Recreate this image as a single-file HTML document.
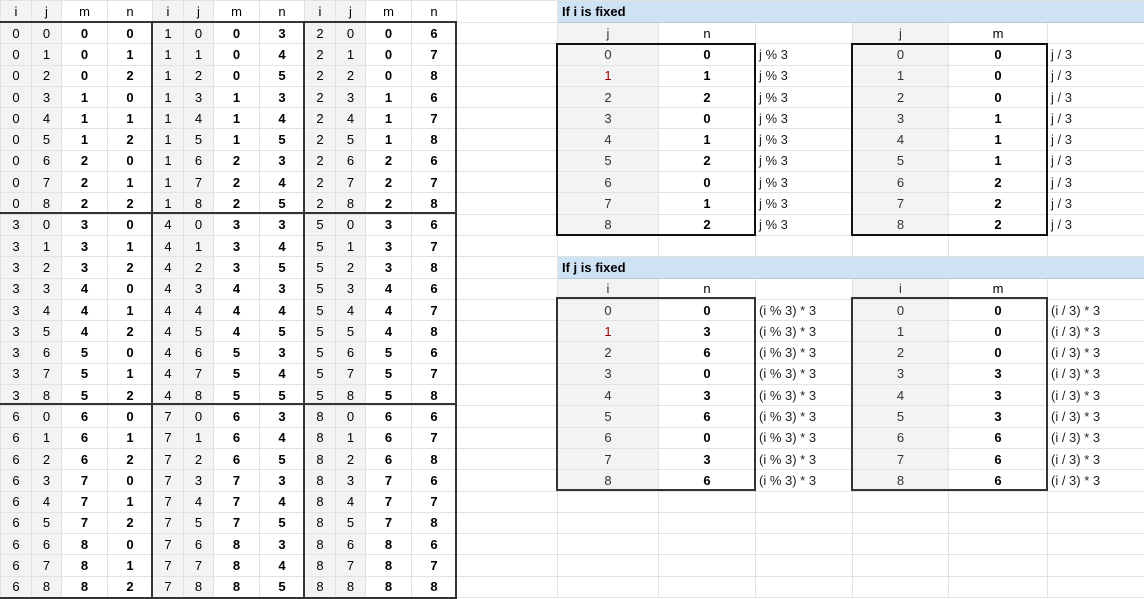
<!DOCTYPE html>
<html><head><meta charset="utf-8"><style>
body{margin:0;background:#fff;width:1144px;height:597px;overflow:hidden;position:relative;font-family:"Liberation Sans",Arial,sans-serif;font-size:13px;color:#000}
table{border-collapse:collapse;table-layout:fixed;width:1144px;position:absolute;left:0;top:0}
td{border:1px solid #e2e2e2;padding:0;text-align:center;white-space:nowrap;overflow:hidden;height:20.31px;line-height:19px}
tr.h0 td{height:21px}
td:nth-child(3),td:nth-child(4),td:nth-child(7),td:nth-child(8),td:nth-child(11),td:nth-child(12),td:nth-child(15),td:nth-child(18){font-weight:bold}
tr.h0 td,tr.hd td{font-weight:normal}
td:nth-child(16),td:nth-child(19){text-align:left;padding-left:3px;color:#222}
td.a{background:#f3f3f3;color:#333}
td.r{color:#900}
td.t{background:#cfe2f3;text-align:left;font-weight:bold !important;padding-left:4px;border-bottom:1px solid #b5c9dc}
col.s{background:#f3f3f3}
.bx{position:absolute;border:2px solid #333;box-sizing:border-box;pointer-events:none}
.bk{border-color:#111}
</style></head><body>
<table>
<colgroup><col class="s" style="width:31px"><col class="s" style="width:30px"><col style="width:46px"><col style="width:45px"><col class="s" style="width:31px"><col class="s" style="width:30px"><col style="width:46px"><col style="width:45px"><col class="s" style="width:31px"><col class="s" style="width:30px"><col style="width:46px"><col style="width:45px"><col style="width:101px"><col style="width:101px"><col style="width:97px"><col style="width:97px"><col style="width:96px"><col style="width:99px"><col style="width:97px"></colgroup>
<tr class="h0"><td>i</td><td>j</td><td>m</td><td>n</td><td>i</td><td>j</td><td>m</td><td>n</td><td>i</td><td>j</td><td>m</td><td>n</td><td></td><td class="t" colspan="6">If i is fixed</td></tr>
<tr class="hd"><td>0</td><td>0</td><td><b>0</b></td><td><b>0</b></td><td>1</td><td>0</td><td><b>0</b></td><td><b>3</b></td><td>2</td><td>0</td><td><b>0</b></td><td><b>6</b></td><td></td><td class="a">j</td><td>n</td><td></td><td class="a">j</td><td>m</td><td></td></tr>
<tr><td>0</td><td>1</td><td>0</td><td>1</td><td>1</td><td>1</td><td>0</td><td>4</td><td>2</td><td>1</td><td>0</td><td>7</td><td></td><td class="a">0</td><td>0</td><td>j % 3</td><td class="a">0</td><td>0</td><td>j / 3</td></tr>
<tr><td>0</td><td>2</td><td>0</td><td>2</td><td>1</td><td>2</td><td>0</td><td>5</td><td>2</td><td>2</td><td>0</td><td>8</td><td></td><td class="a r">1</td><td>1</td><td>j % 3</td><td class="a">1</td><td>0</td><td>j / 3</td></tr>
<tr><td>0</td><td>3</td><td>1</td><td>0</td><td>1</td><td>3</td><td>1</td><td>3</td><td>2</td><td>3</td><td>1</td><td>6</td><td></td><td class="a">2</td><td>2</td><td>j % 3</td><td class="a">2</td><td>0</td><td>j / 3</td></tr>
<tr><td>0</td><td>4</td><td>1</td><td>1</td><td>1</td><td>4</td><td>1</td><td>4</td><td>2</td><td>4</td><td>1</td><td>7</td><td></td><td class="a">3</td><td>0</td><td>j % 3</td><td class="a">3</td><td>1</td><td>j / 3</td></tr>
<tr><td>0</td><td>5</td><td>1</td><td>2</td><td>1</td><td>5</td><td>1</td><td>5</td><td>2</td><td>5</td><td>1</td><td>8</td><td></td><td class="a">4</td><td>1</td><td>j % 3</td><td class="a">4</td><td>1</td><td>j / 3</td></tr>
<tr><td>0</td><td>6</td><td>2</td><td>0</td><td>1</td><td>6</td><td>2</td><td>3</td><td>2</td><td>6</td><td>2</td><td>6</td><td></td><td class="a">5</td><td>2</td><td>j % 3</td><td class="a">5</td><td>1</td><td>j / 3</td></tr>
<tr><td>0</td><td>7</td><td>2</td><td>1</td><td>1</td><td>7</td><td>2</td><td>4</td><td>2</td><td>7</td><td>2</td><td>7</td><td></td><td class="a">6</td><td>0</td><td>j % 3</td><td class="a">6</td><td>2</td><td>j / 3</td></tr>
<tr><td>0</td><td>8</td><td>2</td><td>2</td><td>1</td><td>8</td><td>2</td><td>5</td><td>2</td><td>8</td><td>2</td><td>8</td><td></td><td class="a">7</td><td>1</td><td>j % 3</td><td class="a">7</td><td>2</td><td>j / 3</td></tr>
<tr><td>3</td><td>0</td><td>3</td><td>0</td><td>4</td><td>0</td><td>3</td><td>3</td><td>5</td><td>0</td><td>3</td><td>6</td><td></td><td class="a">8</td><td>2</td><td>j % 3</td><td class="a">8</td><td>2</td><td>j / 3</td></tr>
<tr><td>3</td><td>1</td><td>3</td><td>1</td><td>4</td><td>1</td><td>3</td><td>4</td><td>5</td><td>1</td><td>3</td><td>7</td><td></td><td></td><td></td><td></td><td></td><td></td><td></td></tr>
<tr><td>3</td><td>2</td><td>3</td><td>2</td><td>4</td><td>2</td><td>3</td><td>5</td><td>5</td><td>2</td><td>3</td><td>8</td><td></td><td class="t" colspan="6">If j is fixed</td></tr>
<tr class="hd"><td>3</td><td>3</td><td><b>4</b></td><td><b>0</b></td><td>4</td><td>3</td><td><b>4</b></td><td><b>3</b></td><td>5</td><td>3</td><td><b>4</b></td><td><b>6</b></td><td></td><td class="a">i</td><td>n</td><td></td><td class="a">i</td><td>m</td><td></td></tr>
<tr><td>3</td><td>4</td><td>4</td><td>1</td><td>4</td><td>4</td><td>4</td><td>4</td><td>5</td><td>4</td><td>4</td><td>7</td><td></td><td class="a">0</td><td>0</td><td>(i % 3) * 3</td><td class="a">0</td><td>0</td><td>(i / 3) * 3</td></tr>
<tr><td>3</td><td>5</td><td>4</td><td>2</td><td>4</td><td>5</td><td>4</td><td>5</td><td>5</td><td>5</td><td>4</td><td>8</td><td></td><td class="a r">1</td><td>3</td><td>(i % 3) * 3</td><td class="a">1</td><td>0</td><td>(i / 3) * 3</td></tr>
<tr><td>3</td><td>6</td><td>5</td><td>0</td><td>4</td><td>6</td><td>5</td><td>3</td><td>5</td><td>6</td><td>5</td><td>6</td><td></td><td class="a">2</td><td>6</td><td>(i % 3) * 3</td><td class="a">2</td><td>0</td><td>(i / 3) * 3</td></tr>
<tr><td>3</td><td>7</td><td>5</td><td>1</td><td>4</td><td>7</td><td>5</td><td>4</td><td>5</td><td>7</td><td>5</td><td>7</td><td></td><td class="a">3</td><td>0</td><td>(i % 3) * 3</td><td class="a">3</td><td>3</td><td>(i / 3) * 3</td></tr>
<tr><td>3</td><td>8</td><td>5</td><td>2</td><td>4</td><td>8</td><td>5</td><td>5</td><td>5</td><td>8</td><td>5</td><td>8</td><td></td><td class="a">4</td><td>3</td><td>(i % 3) * 3</td><td class="a">4</td><td>3</td><td>(i / 3) * 3</td></tr>
<tr><td>6</td><td>0</td><td>6</td><td>0</td><td>7</td><td>0</td><td>6</td><td>3</td><td>8</td><td>0</td><td>6</td><td>6</td><td></td><td class="a">5</td><td>6</td><td>(i % 3) * 3</td><td class="a">5</td><td>3</td><td>(i / 3) * 3</td></tr>
<tr><td>6</td><td>1</td><td>6</td><td>1</td><td>7</td><td>1</td><td>6</td><td>4</td><td>8</td><td>1</td><td>6</td><td>7</td><td></td><td class="a">6</td><td>0</td><td>(i % 3) * 3</td><td class="a">6</td><td>6</td><td>(i / 3) * 3</td></tr>
<tr><td>6</td><td>2</td><td>6</td><td>2</td><td>7</td><td>2</td><td>6</td><td>5</td><td>8</td><td>2</td><td>6</td><td>8</td><td></td><td class="a">7</td><td>3</td><td>(i % 3) * 3</td><td class="a">7</td><td>6</td><td>(i / 3) * 3</td></tr>
<tr><td>6</td><td>3</td><td>7</td><td>0</td><td>7</td><td>3</td><td>7</td><td>3</td><td>8</td><td>3</td><td>7</td><td>6</td><td></td><td class="a">8</td><td>6</td><td>(i % 3) * 3</td><td class="a">8</td><td>6</td><td>(i / 3) * 3</td></tr>
<tr><td>6</td><td>4</td><td>7</td><td>1</td><td>7</td><td>4</td><td>7</td><td>4</td><td>8</td><td>4</td><td>7</td><td>7</td><td></td><td></td><td></td><td></td><td></td><td></td><td></td></tr>
<tr><td>6</td><td>5</td><td>7</td><td>2</td><td>7</td><td>5</td><td>7</td><td>5</td><td>8</td><td>5</td><td>7</td><td>8</td><td></td><td></td><td></td><td></td><td></td><td></td><td></td></tr>
<tr><td>6</td><td>6</td><td>8</td><td>0</td><td>7</td><td>6</td><td>8</td><td>3</td><td>8</td><td>6</td><td>8</td><td>6</td><td></td><td></td><td></td><td></td><td></td><td></td><td></td></tr>
<tr><td>6</td><td>7</td><td>8</td><td>1</td><td>7</td><td>7</td><td>8</td><td>4</td><td>8</td><td>7</td><td>8</td><td>7</td><td></td><td></td><td></td><td></td><td></td><td></td><td></td></tr>
<tr><td>6</td><td>8</td><td>8</td><td>2</td><td>7</td><td>8</td><td>8</td><td>5</td><td>8</td><td>8</td><td>8</td><td>8</td><td></td><td></td><td></td><td></td><td></td><td></td><td></td></tr>
</table>
<div class="bx" style="left:-2px;top:21px;width:155px;height:193px"></div>
<div class="bx" style="left:151px;top:21px;width:154px;height:193px"></div>
<div class="bx" style="left:303px;top:21px;width:154px;height:193px"></div>
<div class="bx" style="left:-2px;top:212px;width:155px;height:193px"></div>
<div class="bx" style="left:151px;top:212px;width:154px;height:193px"></div>
<div class="bx" style="left:303px;top:212px;width:154px;height:193px"></div>
<div class="bx" style="left:-2px;top:403px;width:155px;height:196px"></div>
<div class="bx" style="left:151px;top:403px;width:154px;height:196px"></div>
<div class="bx" style="left:303px;top:403px;width:154px;height:196px"></div>
<div class="bx bk" style="left:556px;top:43px;width:200px;height:193px"></div>
<div class="bx bk" style="left:851px;top:43px;width:197px;height:193px"></div>
<div class="bx" style="left:556px;top:297px;width:200px;height:194px"></div>
<div class="bx" style="left:851px;top:297px;width:197px;height:194px"></div>
</body></html>
